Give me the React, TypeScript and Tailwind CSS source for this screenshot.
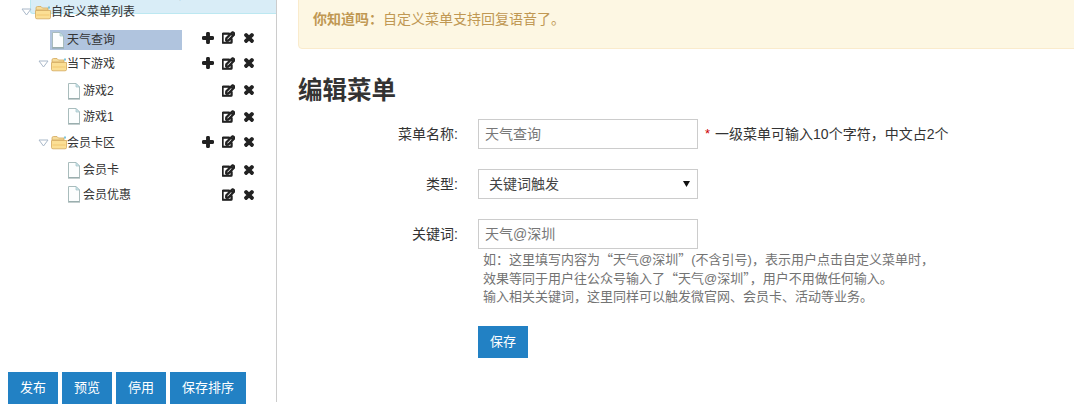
import React from "react";
import { FaPlus, FaTimes, FaRegEdit } from "react-icons/fa";

const FONT = "font-['Liberation_Sans','Noto_Sans_CJK_SC',sans-serif]";

function Tri() {
  return (
    <svg width="11" height="8" viewBox="0 0 11 8" className="shrink-0">
      <path d="M1 1 H10 L5.5 7 Z" fill="#fff" stroke="#a9b8c9" strokeWidth="1" />
    </svg>
  );
}

function Folder() {
  return (
    <svg width="16" height="15" viewBox="0 0 16 15" className="shrink-0">
      <path d="M1 3 Q1 1.5 2.5 1.5 H6 L7.5 3 H13 V5 H1 Z" fill="#f6dc9c" stroke="#d3a85c" strokeWidth="0.8" />
      <rect x="13" y="1.5" width="2" height="2" fill="#7cc4dd" />
      <path d="M0.5 5.5 H15.5 V12.5 Q15.5 13.8 14 13.8 H2 Q0.5 13.8 0.5 12.5 Z" fill="#fbdf95" stroke="#d3a85c" strokeWidth="0.8" />
      <rect x="1.5" y="9.5" width="13" height="1" fill="#f2c872" />
    </svg>
  );
}

function File() {
  return (
    <svg width="14" height="17" viewBox="0 0 14 17" className="shrink-0">
      <path d="M1.5 0.5 H9 L12.5 4 V15.5 H1.5 Z" fill="#fcfefe" stroke="#a9bcbc" strokeWidth="1" />
      <path d="M9 0.5 V4 H12.5 Z" fill="#cfe6ea" stroke="#9fc0c6" strokeWidth="0.7" />
      <path d="M1 16 H13" stroke="#8aa0a0" strokeWidth="1" />
    </svg>
  );
}

function Actions({ plus = false }: { plus?: boolean }) {
  return (
    <div className="absolute left-[202px] -top-px h-full flex items-center text-[#222]">
      <span className="w-[20px] flex"><span className={plus ? "flex" : "hidden"}><FaPlus size={12} className="stroke-[70px]" stroke="currentColor" /></span></span>
      <span className="w-[21px] flex"><FaRegEdit size={13} className="stroke-[50px]" stroke="currentColor" /></span>
      <span className="flex"><FaTimes size={12} className="stroke-[70px]" stroke="currentColor" /></span>
    </div>
  );
}

function FolderRow({ label, h }: { label: string; h: string }) {
  return (
    <div className={`relative flex items-center ${h} pl-[38px] text-[12px] text-[#333]`}>
      <span className="mr-[2px]"><Tri /></span>
      <Folder />
      <span>{label}</span>
      <Actions plus />
    </div>
  );
}

function Leaf({ label, h }: { label: string; h: string }) {
  return (
    <div className={`relative flex items-center ${h} pl-[67px] text-[12px] text-[#333]`}>
      <File />
      <span className="ml-[2px]">{label}</span>
      <Actions />
    </div>
  );
}

function Btn({ w, label }: { w: string; label: string }) {
  return (
    <button className={`${w} h-[32px] bg-[#2281c4] text-white text-[13px] flex items-center justify-center`}>
      {label}
    </button>
  );
}

function Label({ text }: { text: string }) {
  return <label className="w-[160px] text-right text-[14px] text-[#333] shrink-0 mr-[20px]">{text}</label>;
}

function Q({ c }: { c: string }) {
  return <span className="font-['Noto_Sans_CJK_SC',sans-serif]">{c}</span>;
}

export default function App() {
  return (
    <div className={`${FONT} w-[1074px] h-[416px] overflow-hidden bg-white flex`}>
      <aside className="relative w-[277px] h-[402px] border-r border-[#ccc] shrink-0 flex flex-col">
        <div className="absolute left-[30px] top-0 right-0 h-[14px] bg-[#d9edf7] border-b border-l border-[#bce8f1] overflow-hidden rounded-bl-[3px]">
          <p className="-mt-[13px] pl-[20px] text-[12px] leading-[16px] whitespace-nowrap text-[#31708f]">{"可创建最多3个一级菜单\uFF0C每个一级菜单下可创建最多5个二级菜单\u3002"}</p>
        </div>
        <div className="relative pt-[1px]">
          <div className="relative flex items-center h-[22px] pl-[21px] text-[12px] text-[#333]">
            <span className="mr-[3px]"><Tri /></span>
            <Folder />
            <span>自定义菜单列表</span>
          </div>
          <div className="relative h-[27px] mt-[2px]">
            <div className="absolute left-[50px] top-[5px] w-[132px] h-[20px] bg-[#b0c4de]" />
            <div className="relative flex items-center h-full pl-[51px] pt-[3px] text-[12px] text-[#333]">
              <File />
              <span className="ml-[2px]">天气查询</span>
              <Actions plus />
            </div>
          </div>
          <FolderRow label="当下游戏" h="h-[24px]" />
          <Leaf label="游戏2" h="h-[30px]" />
          <Leaf label="游戏1" h="h-[23px] pb-[2px]" />
          <FolderRow label="会员卡区" h="h-[27px]" />
          <Leaf label="会员卡" h="h-[30px] pb-[2px]" />
          <Leaf label="会员优惠" h="h-[19px] pb-[2px]" />
        </div>
        <div className="mt-auto -mb-[2px] ml-[8px] flex gap-[4px]">
          <Btn w="w-[50px]" label="发布" />
          <Btn w="w-[50px]" label="预览" />
          <Btn w="w-[50px]" label="停用" />
          <Btn w="w-[76px]" label="保存排序" />
        </div>
      </aside>
      <main className="flex-1 min-w-0 pl-[21px]">
        <div className="-mt-[10px] h-[59px] bg-[#fdf7e3] border border-[#faebcc] rounded-[4px] pl-[14px] pb-[1px] flex items-center text-[14px] text-[#c09853] -mr-[10px]">
          <b className="font-bold">{"你知道吗\uFF1A"}</b>
          <span>{"自定义菜单支持回复语音了\u3002"}</span>
        </div>
        <h1 className="text-[24.5px] leading-[34px] font-bold text-[#333] mt-[25px]">编辑菜单</h1>
        <div className="mt-[11px] flex items-center h-[30px]">
          <Label text="菜单名称:" />
          <div className="w-[220px] h-[30px] border border-[#ccc] px-[6px] flex items-center text-[14px] text-[#777]">天气查询</div>
          <span className="ml-[7px] text-[#c00] text-[13px]">*</span>
          <span className="ml-[5px] text-[14px] text-[#333]">{"一级菜单可输入10个字符\uFF0C中文占2个"}</span>
        </div>
        <div className="mt-[20px] flex items-center h-[30px]">
          <Label text="类型:" />
          <div className="relative w-[220px] h-[30px] border border-[#ccc] pl-[10px] flex items-center text-[14px] text-[#444]">
            关键词触发
            <svg width="7" height="6" viewBox="0 0 7 6" className="absolute right-[7px] top-[11px]"><path d="M0 0H7L3.5 6Z" fill="#111" /></svg>
          </div>
        </div>
        <div className="mt-[20px] flex items-center h-[30px]">
          <Label text="关键词:" />
          <div className="w-[220px] h-[30px] border border-[#ccc] px-[6px] flex items-center text-[14px] text-[#777]">天气@深圳</div>
        </div>
        <div className="ml-[185px] text-[13px] leading-[19px] text-[#737373] whitespace-nowrap">
          <p className="h-[19px]">{"如\uFF1A这里填写内容为"}<Q c={"\u201C"} />{"天气@深圳"}<Q c={"\u201D"} />{"(不含引号)\uFF0C表示用户点击自定义菜单时\uFF0C"}</p>
          <p className="h-[19px]">{"效果等同于用户往公众号输入了"}<Q c={"\u201C"} />{"天气@深圳"}<Q c={"\u201D"} />{"\uFF0C用户不用做任何输入\u3002"}</p>
          <p className="h-[19px]">{"输入相关关键词\uFF0C这里同样可以触发微官网\u3001会员卡\u3001活动等业务\u3002"}</p>
        </div>
        <div className="ml-[180px] mt-[20px]">
          <Btn w="w-[50px]" label="保存" />
        </div>
      </main>
    </div>
  );
}
